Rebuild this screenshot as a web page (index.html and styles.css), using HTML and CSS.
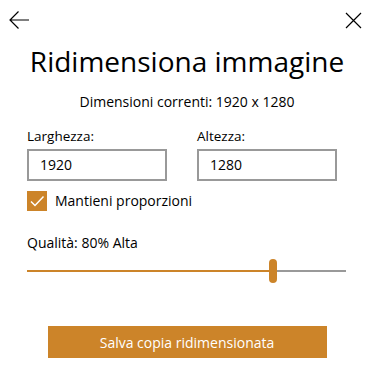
FILE: index.html
```html
<!DOCTYPE html>
<html>
<head>
<meta charset="utf-8">
<link rel="stylesheet" href="styles.css">
</head>
<body>
<div class="dialog">
  <div class="topbar">
    <svg class="icon-back" width="22" height="20" viewBox="0 0 22 20"><path d="M21 10H2M10.5 1.5L2 10l8.5 8.5" fill="none" stroke="#000" stroke-width="1.2"/></svg>
    <svg class="icon-close" width="17" height="17" viewBox="0 0 17 17"><path d="M1 1L16 16M16 1L1 16" fill="none" stroke="#000" stroke-width="1.2"/></svg>
  </div>
  <h1 class="title">Ridimensiona immagine</h1>
  <p class="current">Dimensioni correnti: 1920 x 1280</p>
  <div class="fields">
    <label class="field">
      <span class="field-label">Larghezza:</span>
      <span class="input">1920</span>
    </label>
    <label class="field">
      <span class="field-label">Altezza:</span>
      <span class="input">1280</span>
    </label>
  </div>
  <div class="check">
    <span class="box"><svg width="20" height="20" viewBox="0 0 20 20"><path d="M4 10.5l4 4 8.5-9" fill="none" stroke="#fff" stroke-width="1.5"/></svg></span>
    <span class="check-label">Mantieni proporzioni</span>
  </div>
  <div class="quality">Qualità: 80% Alta</div>
  <div class="slider">
    <div class="track-fill" style="width: 242px"></div>
    <div class="thumb"></div>
    <div class="track-rest"></div>
  </div>
  <div class="actions">
    <button class="save">Salva copia ridimensionata</button>
  </div>
</div>
</body>
</html>
```
FILE: styles.css
```css
html, body {
  margin: 0;
  padding: 0;
  background: #fff;
}
body {
  font-family: "Open Sans", "Noto Sans", sans-serif;
  color: #000;
  width: 374px;
  height: 374px;
  overflow: hidden;
}
.dialog {
  padding: 0 27px;
}
.topbar {
  display: flex;
  justify-content: space-between;
  align-items: center;
  margin: 0 -27px;
  padding: 10px 12px 0 8px;
  height: 20px;
}
.icon-back, .icon-close {
  display: block;
}
.title {
  margin: 11px -20px 0;
  font-weight: 400;
  font-size: 28px;
  line-height: 40px;
  text-align: center;
  white-space: nowrap;
}
.current {
  margin: 12px 0 0;
  font-size: 14px;
  line-height: 18px;
  text-align: center;
}
.fields {
  display: flex;
  gap: 30px;
  margin-top: 16px;
}
.field {
  display: flex;
  flex-direction: column;
  width: 140px;
}
.field-label {
  font-size: 13.5px;
  line-height: 18px;
  margin-bottom: 4px;
}
.input {
  box-sizing: border-box;
  height: 32px;
  border: 2px solid #999;
  padding: 0 11px;
  font-size: 14px;
  line-height: 28px;
}
.check {
  display: flex;
  align-items: center;
  gap: 8px;
  margin-top: 10px;
}
.box {
  width: 20px;
  height: 20px;
  background: #cc8429;
  display: block;
}
.box svg { display: block; }
.check-label {
  font-size: 14px;
  line-height: 20px;
}
.quality {
  margin-top: 23px;
  font-size: 14px;
  line-height: 18px;
}
.slider {
  display: flex;
  align-items: center;
  height: 24px;
  margin-top: 7px;
  width: 319px;
}
.track-fill {
  height: 2px;
  background: #cc8429;
}
.thumb {
  width: 8px;
  height: 24px;
  border-radius: 4px;
  background: #cc8429;
  flex: none;
}
.track-rest {
  flex: 1;
  height: 2px;
  background: #999;
}
.actions {
  display: flex;
  justify-content: center;
  margin-top: 43px;
}
.save {
  width: 279px;
  height: 32px;
  border: 0;
  background: #cc8429;
  color: #fff;
  font-family: inherit;
  font-size: 14px;
  padding: 0;
}
```
